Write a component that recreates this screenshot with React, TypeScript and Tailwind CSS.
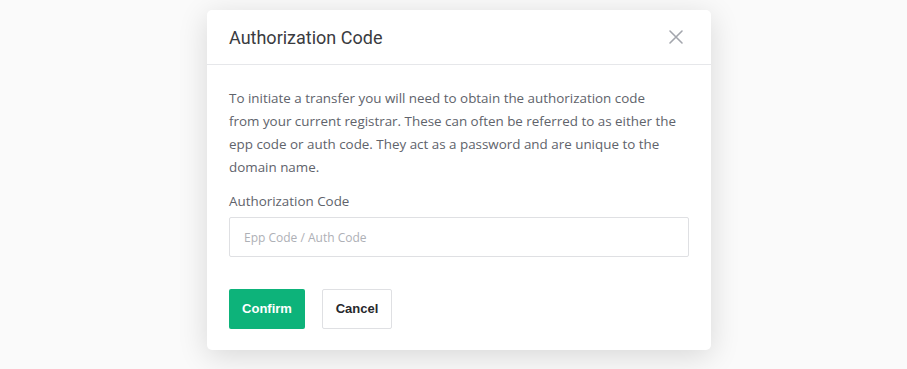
import React from "react";

const CloseIcon = () => (
  <svg width="16" height="16" viewBox="0 0 16 16" fill="none">
    <path d="M2 2L14 14M14 2L2 14" stroke="#a3a6ad" strokeWidth="1.6" strokeLinecap="round" />
  </svg>
);

export default function App() {
  return (
    <div className="w-full h-[369px] bg-[#fafafa] flex justify-center pt-[10px] pl-[11px] font-['Roboto',sans-serif] overflow-hidden">
      <div className="w-[504px] h-[340px] bg-white rounded-[5px] shadow-[0_6px_30px_rgba(0,0,0,0.14)] flex flex-col">
        <div className="h-[55px] flex items-center justify-between pl-[22px] pr-[27px] border-b border-[#e6e7ea]">
          <h2 className="text-[18px] text-[#3a3b3f] font-normal">Authorization Code</h2>
          <button className="p-0">
            <CloseIcon />
          </button>
        </div>
        <div className="px-[22px] pt-[22px]">
          <p className="text-[13.4px] leading-[23px] text-[#60636b] font-['Open_Sans',sans-serif]">
            To initiate a transfer you will need to obtain the authorization code
            <br />
            from your current registrar. These can often be referred to as either the epp code or auth code. They act as a password and are unique to the domain name.
          </p>
          <label className="block mt-[12px] text-[13.4px] text-[#60636b] leading-[20px] font-['Open_Sans',sans-serif]">
            Authorization Code
          </label>
          <input
            className="mt-[6px] w-full h-[40px] border border-[#dfe0e3] rounded-[2px] px-[14px] text-[12px] font-['Open_Sans',sans-serif] outline-none placeholder:text-[#aeb0b6]"
            placeholder="Epp Code / Auth Code"
          />
          <div className="flex gap-[17px] mt-[32px]">
            <button className="w-[76px] h-[40px] rounded-[2px] bg-[#0db37a] text-white text-[13px] font-bold font-['Liberation_Sans',sans-serif]">
              Confirm
            </button>
            <button className="w-[70px] h-[40px] rounded-[2px] bg-white border border-[#dfe0e3] text-[#27282c] text-[13px] font-bold font-['Liberation_Sans',sans-serif]">
              Cancel
            </button>
          </div>
        </div>
      </div>
    </div>
  );
}
